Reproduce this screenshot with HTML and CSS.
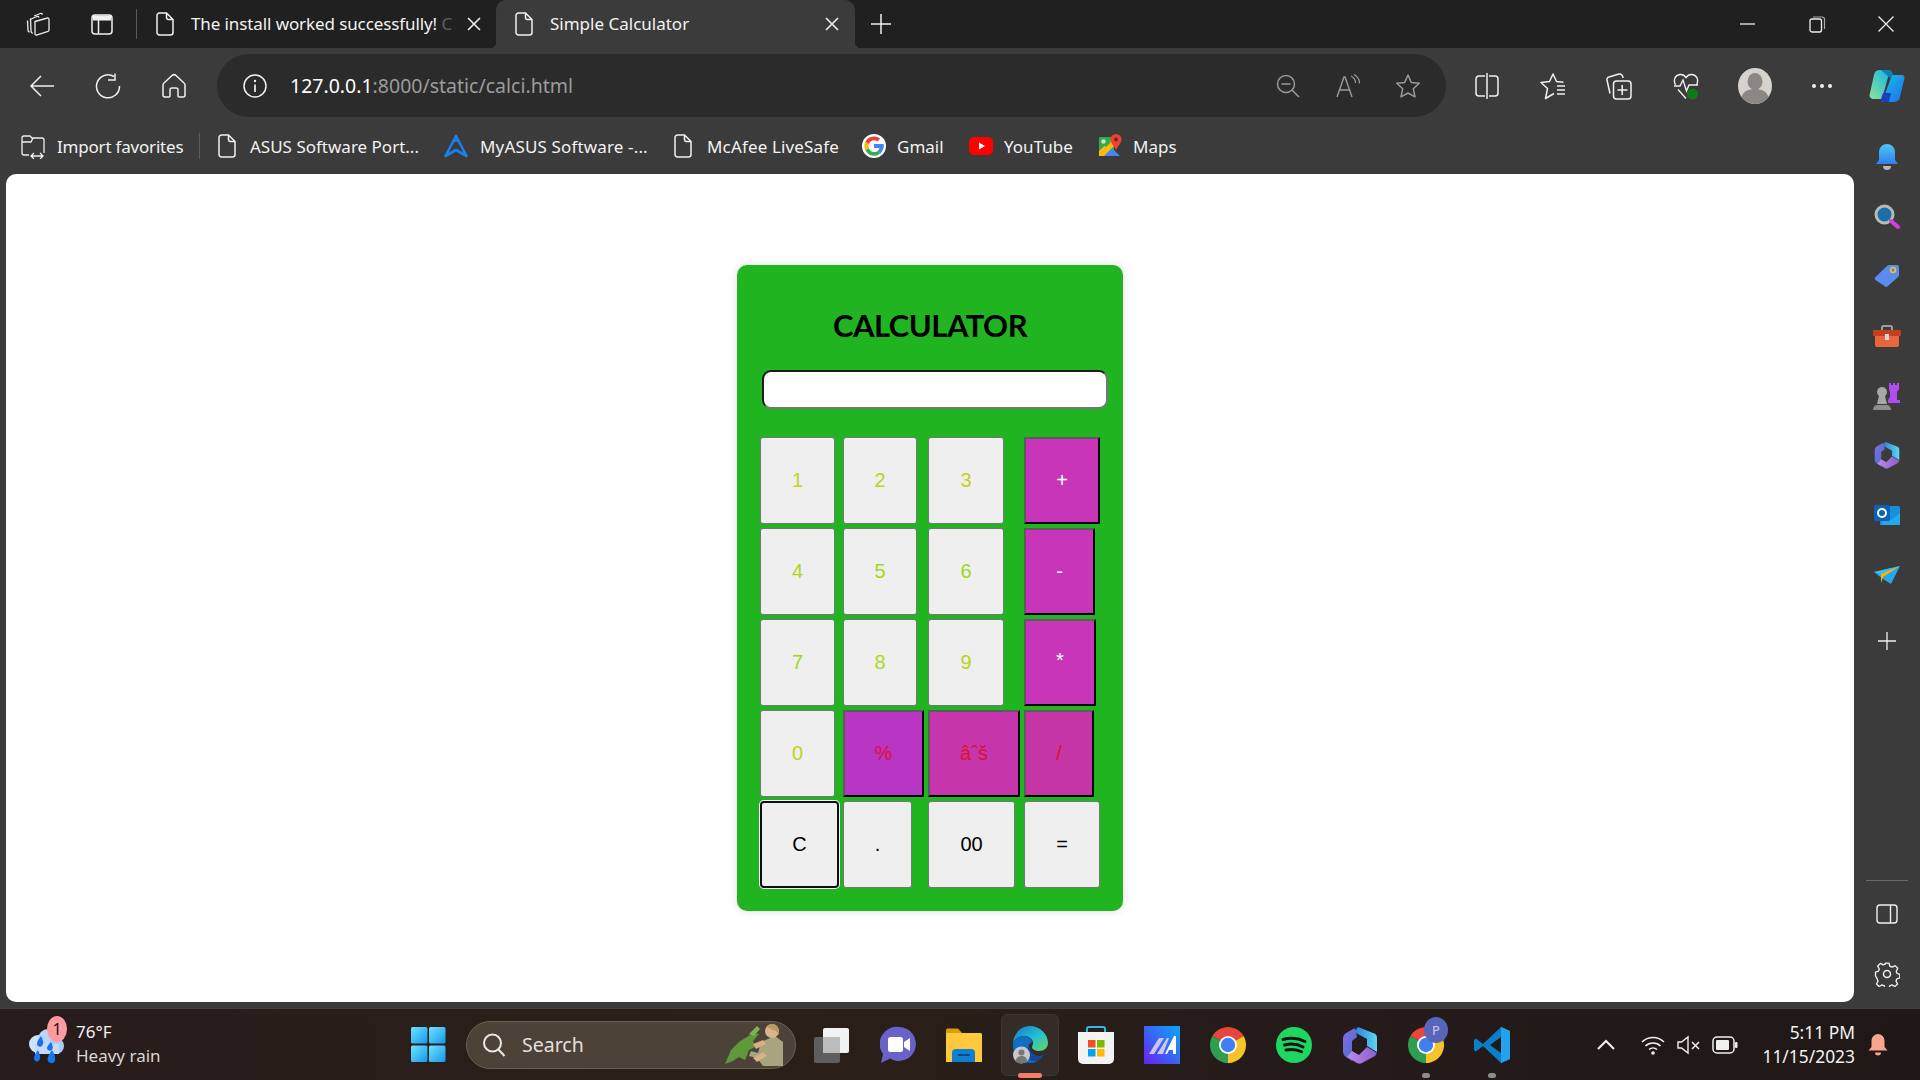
FILE: index.html
```html
<!DOCTYPE html>
<html lang="en">
<head>
<meta charset="utf-8">
<title>Simple Calculator</title>
<link rel="stylesheet" href="styles.css">
</head>
<body>
<svg class="defs" aria-hidden="true">
  <defs>
    <linearGradient id="gM1" x1="0" y1="0" x2="1" y2="1"><stop offset="0" stop-color="#8a6be0"/><stop offset="1" stop-color="#3f6fd0"/></linearGradient>
    <linearGradient id="gM2" x1="0" y1="0" x2="1" y2="0"><stop offset="0" stop-color="#2a7fd8"/><stop offset="1" stop-color="#5fd6f0"/></linearGradient>
    <linearGradient id="gM3" x1="0" y1="0" x2="1" y2="0"><stop offset="0" stop-color="#b98ae8"/><stop offset="1" stop-color="#8a5fd0"/></linearGradient>
    <linearGradient id="gEdge" x1="0" y1="0" x2="1" y2="1"><stop offset="0" stop-color="#1478c8"/><stop offset=".55" stop-color="#2ac0d0"/><stop offset="1" stop-color="#66d860"/></linearGradient>
    <linearGradient id="gBell" x1="0" y1="0" x2="0" y2="1"><stop offset="0" stop-color="#4fc6f5"/><stop offset="1" stop-color="#2f80ed"/></linearGradient>
    <linearGradient id="gWin" x1="0" y1="0" x2="1" y2="1"><stop offset="0" stop-color="#6fe3ff"/><stop offset="1" stop-color="#1497ea"/></linearGradient>
    <linearGradient id="gAsus" x1="1" y1="0" x2="0" y2="1"><stop offset="0" stop-color="#08a8f8"/><stop offset="1" stop-color="#6a22f0"/></linearGradient>
    <linearGradient id="gCop" x1="0" y1="0" x2="1" y2="1"><stop offset="0" stop-color="#16c0e8"/><stop offset="1" stop-color="#1f6fe8"/></linearGradient>
    <linearGradient id="gCop2" x1="0" y1="1" x2="1" y2="0"><stop offset="0" stop-color="#8fe39a"/><stop offset="1" stop-color="#10b4e8"/></linearGradient>
    <symbol id="doc" viewBox="0 0 18 24"><path d="M3.5 1h7l6.500 6.500V20.500a2.500 2.500 0 0 1-2.500 2.500h-11A2.500 2.500 0 0 1 1 20.500V3.500A2.500 2.500 0 0 1 3.500 1zM10.500 1v4.500a2 2 0 0 0 2 2H17" fill="none" stroke="#f0f0f0" stroke-width="1.500"/></symbol>
    <symbol id="m365" viewBox="0 0 36 38"><path d="M16 1 31 7a5 5 0 0 1 4 5v14L25 20V13L12 6z" fill="url(#gM2)"/><path d="M1 12a6 6 0 0 1 3-5l9-5 2 9-5 4v10l5 5-5 5-6-4a6 6 0 0 1-3-5z" fill="url(#gM1)"/><path d="M10 25l7 4 8-8 10 6-2 3-13 7a5 5 0 0 1-5 0L5 31z" fill="url(#gM3)"/></symbol>
    <symbol id="chromeLogo" viewBox="0 0 40 40"><path d="M20 20 37.300 10A20 20 0 0 0 2.700 10z" fill="#e8453c"/><path d="M20 20 2.700 10A20 20 0 0 0 20 40z" fill="#2f9e4f"/><path d="M20 20 20 40A20 20 0 0 0 37.300 10z" fill="#f8c22b"/><circle cx="20" cy="20" r="10" fill="#fff"/><circle cx="20" cy="20" r="8" fill="#3f7ff0"/></symbol>
  </defs>
</svg>

<header class="tabstrip">
  <div class="tab-slot"><svg class="ic" viewBox="0 0 26 24" width="26" height="24"><g fill="none" stroke="#eee" stroke-width="1.300"><path d="M9 4 15.500 1.500a1.500 1.500 0 0 1 2 1.200"/><path d="M5 7.500 12 4.500a1.500 1.500 0 0 1 2 1"/><path d="M2.500 8.500 3 18c0 1 .7 2 1.700 2.200"/><path d="M5.500 6.500 6 19c0 1 .7 2 1.700 2.300"/><path d="M10 9.500 22.500 6a1.200 1.200 0 0 1 1.500 1.200V18a1.500 1.500 0 0 1-1 1.400L11.500 23a1.200 1.200 0 0 1-1.500-1.200z"/></g></svg></div>
  <div class="tab-slot"><svg class="ic" viewBox="0 0 24 24" width="24" height="24"><rect x="2" y="3" width="20" height="19" rx="3" fill="none" stroke="#f0f0f0" stroke-width="1.500"/><path d="M3 3.500h18v5H3z" fill="#f0f0f0"/><path d="M8.500 8v13.500" stroke="#f0f0f0" stroke-width="1.500"/></svg></div>
  <div class="tab-sep"></div>
  <div class="tab tab-idle">
    <svg class="doc-ic" width="18" height="24"><use href="#doc"/></svg>
    <span class="tab-title">The install worked successfully!<span class="tab-dim"> C</span></span>
    <svg class="tab-x" viewBox="0 0 18 18" width="18" height="18"><path d="M3 3l12 12M15 3 3 15" stroke="#f0f0f0" stroke-width="1.600"/></svg>
  </div>
  <div class="tab tab-active">
    <svg class="doc-ic" width="18" height="24"><use href="#doc"/></svg>
    <span class="tab-title">Simple Calculator</span>
    <svg class="tab-x" viewBox="0 0 18 18" width="18" height="18"><path d="M3 3l12 12M15 3 3 15" stroke="#f0f0f0" stroke-width="1.600"/></svg>
  </div>
  <svg class="tab-new" viewBox="0 0 24 24" width="24" height="24"><path d="M12 2v20M2 12h20" stroke="#f0f0f0" stroke-width="1.500"/></svg>
  <div class="win-ctrls">
    <div class="win-slot"><svg viewBox="0 0 18 18" width="18" height="18"><path d="M1 9h15" stroke="#eee" stroke-width="1.300"/></svg></div>
    <div class="win-slot"><svg viewBox="0 0 18 18" width="18" height="18"><rect x="2" y="4" width="11.500" height="13" rx="2" fill="none" stroke="#eee" stroke-width="1.300"/><path d="M5 2h9a2.500 2.500 0 0 1 2.500 2.500V14" fill="none" stroke="#aaa" stroke-width="1.200"/></svg></div>
    <div class="win-slot"><svg viewBox="0 0 18 18" width="18" height="18"><path d="M1.500 1.500l15 15M16.500 1.500l-15 15" stroke="#eee" stroke-width="1.300"/></svg></div>
  </div>
</header>

<nav class="toolbar">
  <div class="tool-slot tool-first"><svg viewBox="0 0 26 24" width="26" height="24"><path d="M25 12H2M12 2 2 12l10 10" fill="none" stroke="#f0f0f0" stroke-width="1.500"/></svg></div>
  <div class="tool-slot"><svg viewBox="0 0 26 26" width="26" height="26"><path d="M19 3.500A11.500 11.500 0 1 0 24.500 13" fill="none" stroke="#f0f0f0" stroke-width="1.500"/><path d="M20 .5v6.500h-7" fill="none" stroke="#f0f0f0" stroke-width="1.500"/></svg></div>
  <div class="tool-slot"><svg viewBox="0 0 24 26" width="24" height="26"><path d="M10 2.500a3 3 0 0 1 4 0l8 7.500a2.500 2.500 0 0 1 1 2v10a2 2 0 0 1-2 2h-4a1 1 0 0 1-1-1v-6a2 2 0 0 0-2-2h-4a2 2 0 0 0-2 2v6a1 1 0 0 1-1 1H3a2 2 0 0 1-2-2V12a2.500 2.500 0 0 1 1-2z" fill="none" stroke="#f0f0f0" stroke-width="1.500"/></svg></div>
  <div class="omnibox">
    <svg class="omni-info" viewBox="0 0 24 24" width="24" height="24"><circle cx="12" cy="12" r="11" fill="none" stroke="#f0f0f0" stroke-width="1.500"/><path d="M12 10.500V18" stroke="#f0f0f0" stroke-width="1.700"/><circle cx="12" cy="7" r="1.200" fill="#f0f0f0"/></svg>
    <span class="url"><span class="url-host">127.0.0.1</span>:8000/static/calci.html</span>
    <svg class="omni-right omni-first" viewBox="0 0 24 24" width="24" height="24"><circle cx="10" cy="10" r="8.500" fill="none" stroke="#9a9a9a" stroke-width="1.500"/><path d="M5.500 10h9M16 16l7 7" stroke="#9a9a9a" stroke-width="1.500"/></svg>
    <svg class="omni-right" viewBox="0 0 24 24" width="24" height="24"><path d="M1 23 8 3h1l7 20M3.500 16h11" fill="none" stroke="#9a9a9a" stroke-width="1.400"/><path d="M15 2c3 1.500 4.500 4 4.500 7M18 .5c3.500 2 5.500 5.500 5.500 9" fill="none" stroke="#9a9a9a" stroke-width="1.200"/></svg>
    <svg class="omni-right omni-star" viewBox="0 0 26 26" width="26" height="26"><path d="M13 2l3.300 7.500 8 .8-6 5.500 1.700 8L13 20l-7 3.800 1.700-8-6-5.500 8-.8z" fill="none" stroke="#9a9a9a" stroke-width="1.500" stroke-linejoin="round"/></svg>
  </div>
  <div class="tool-slot tool-gap"><svg viewBox="0 0 24 26" width="24" height="26"><path d="M10 3H4a3 3 0 0 0-3 3v14a3 3 0 0 0 3 3h6M14 3h6a3 3 0 0 1 3 3v14a3 3 0 0 1-3 3h-6M12 0v26" fill="none" stroke="#f0f0f0" stroke-width="1.500"/></svg></div>
  <div class="tool-slot"><svg viewBox="0 0 26 28" width="26" height="28"><path d="M14 21.500 5.500 26.500 7.500 16.500 1 10.500l8.500-1L13 2l3.500 7.500 7 .8" fill="none" stroke="#f0f0f0" stroke-width="1.500" stroke-linejoin="round"/><path d="M17 14h8M17 18h8M17 22h8" stroke="#f0f0f0" stroke-width="1.400"/></svg></div>
  <div class="tool-slot"><svg viewBox="0 0 26 28" width="26" height="28"><path d="M4 21.500 1 8a2.500 2.500 0 0 1 2-3l10-3a3 3 0 0 1 3.500 2l.7 2" fill="none" stroke="#f0f0f0" stroke-width="1.500"/><rect x="7.500" y="9" width="17.500" height="18" rx="3" fill="#3b3b3b" stroke="#f0f0f0" stroke-width="1.500"/><path d="M16.200 13v10M11.500 18h10" stroke="#f0f0f0" stroke-width="1.500"/></svg></div>
  <div class="tool-slot tool-67"><svg viewBox="0 0 26 28" width="26" height="28"><path d="M2.500 13C0 8 2 3 7 2.500c3-.3 5 1.500 6 3 1-1.500 3-3.300 6-3 5 .5 7 5.500 4.500 10.500M5 17.500l8 9" fill="none" stroke="#f0f0f0" stroke-width="1.400"/><path d="M1 14h6l3-6 3.500 11 2.500-6h9" fill="none" stroke="#f0f0f0" stroke-width="1.400"/><circle cx="19.500" cy="22" r="5.500" fill="#107c10"/><path d="M17 22l2 2 3-4" fill="none" stroke="#073" stroke-width="1.200"/></svg></div>
  <div class="tool-slot tool-wide"><svg viewBox="0 0 34 36" width="34" height="36"><ellipse cx="17" cy="18" rx="17" ry="18" fill="#d6d3cf"/><ellipse cx="17" cy="13.500" rx="7.500" ry="8.500" fill="#8a8785"/><path d="M3.500 29c2-6 7-8 13.500-8s11.500 2 13.500 8c-3 4-8 7-13.500 7s-10.500-3-13.500-7z" fill="#8a8785"/></svg></div>
  <div class="tool-slot tool-64"><svg viewBox="0 0 22 6" width="22" height="6"><circle cx="3" cy="3" r="2" fill="#f0f0f0"/><circle cx="11" cy="3" r="2" fill="#f0f0f0"/><circle cx="19" cy="3" r="2" fill="#f0f0f0"/></svg></div>
  <div class="tool-slot"><svg viewBox="0 0 36 34" width="36" height="34"><path d="M10 1h11L13 30H4a3.500 3.500 0 0 1-3.300-4.500L5 6a6 6 0 0 1 5-5z" fill="url(#gCop2)"/><path d="M23 6h10a2.500 2.500 0 0 1 2.500 3L31 28a6 6 0 0 1-5.500 5H13z" fill="url(#gCop)"/><path d="M14 24h8l-2 9h-5a3 3 0 0 1-3-3z" fill="#1b3fc4"/><path d="M12 1h8a3 3 0 0 1 3 2l1 3-3 3z" fill="#0f7fb5"/></svg></div>
</nav>

<div class="workspace">
  <div class="page-col">
    <div class="bookmarks">
      <div class="bm"><svg viewBox="0 0 24 26" width="24" height="26"><path d="M1 20V5a2 2 0 0 1 2-2h6l2 2h10a2 2 0 0 1 2 2v13M1 9h9l2-4M1 20a2 2 0 0 0 2 2h5M10 23h12M13 20l-3 3 3 3M19 20l3 3-3 3" fill="none" stroke="#f0f0f0" stroke-width="1.300"/></svg><span class="bm-tight">Import favorites</span></div>
      <div class="bm-sep"></div>
      <div class="bm"><svg class="doc-ic" width="18" height="24"><use href="#doc"/></svg><span>ASUS Software Port...</span></div>
      <div class="bm"><svg viewBox="0 0 24 24" width="24" height="24"><path d="M12 2 22.500 22 12 16 1.500 22zM12 2v6" fill="none" stroke="#1a80f0" stroke-width="2.600" stroke-linejoin="round"/></svg><span class="bm-wide">MyASUS Software -...</span></div>
      <div class="bm"><svg class="doc-ic" width="18" height="24"><use href="#doc"/></svg><span class="bm-wide">McAfee LiveSafe</span></div>
      <div class="bm"><svg viewBox="0 0 24 24" width="24" height="24"><circle cx="12" cy="12" r="12" fill="#fff"/><path d="M12 10v4h5.500a5.500 5.500 0 0 1-2 3l3 2.300c2-1.800 3-4.300 3-7.300 0-.7 0-1.300-.2-2z" fill="#4285f4"/><path d="M6.800 14a5.500 5.500 0 0 0 8.700 3l3 2.300A9.500 9.500 0 0 1 3.500 16.300z" fill="#34a853"/><path d="M6.800 14a5.500 5.500 0 0 1 0-4L3.500 7.500a9.500 9.500 0 0 0 0 9z" fill="#fbbc05"/><path d="M6.800 10a5.500 5.500 0 0 1 8.500-2.500l2.800-2.700A9.500 9.500 0 0 0 3.500 7.500z" fill="#ea4335"/><circle cx="12" cy="12" r="4.500" fill="#fff"/><path d="M12 10h9.500v4H12z" fill="#4285f4"/></svg><span>Gmail</span></div>
      <div class="bm"><svg viewBox="0 0 24 20" width="24" height="20"><rect y="1" width="24" height="18" rx="5" fill="#f00"/><path d="M10 6.500v7l6-3.500z" fill="#fff"/></svg><span>YouTube</span></div>
      <div class="bm"><svg viewBox="0 0 24 24" width="24" height="24"><path d="M1 3h15v19H1z" fill="#34a853"/><path d="M1 22 11 11l11 11z" fill="#4285f4"/><path d="M1 22V17L16 3h2l2 5L6 22z" fill="#fbbc05"/><path d="M1 3h7l5 5-5 5-7-7z" fill="#34a853"/><circle cx="5.500" cy="7.500" r="2.200" fill="#c6e8d0"/><path d="M18 0a5.500 5.500 0 0 1 5.500 5.500c0 4-4 6-5.500 11-1.500-5-5.500-7-5.500-11A5.500 5.500 0 0 1 18 0z" fill="#ea4335"/><circle cx="18" cy="5.500" r="2" fill="#8f1c14"/></svg><span>Maps</span></div>
    </div>
    <main class="page">
      <section class="calc">
        <h1 class="calc-title">CALCULATOR</h1>
        <input class="calc-display" type="text">
        <div class="keys">
          <button class="key num w75 c-a">1</button><button class="key num w74 c-b">2</button><button class="key num w76 c-a">3</button><button class="key op w76 bg-a t-w">+</button>
          <button class="key num w75 c-c">4</button><button class="key num w74 c-d">5</button><button class="key num w76 c-e">6</button><button class="key op w71 bg-a t-w">-</button>
          <button class="key num w75 c-e">7</button><button class="key num w74 c-c">8</button><button class="key num w76 c-b">9</button><button class="key op w72 bg-a t-w t-up">*</button>
          <button class="key num w75 c-a">0</button><button class="key op w81 bg-b t-r">%</button><button class="key op w92 bg-c t-r">âˆš</button><button class="key op w70 bg-d t-r">/</button>
          <button class="key num w79 focus">C</button><button class="key num w69">.</button><button class="key num w87">00</button><button class="key num w76">=</button>
        </div>
      </section>
    </main>
  </div>
  <aside class="sidebar">
    <div class="side-slot"><svg viewBox="0 0 24 28" width="24" height="28"><path d="M12 1a8 8 0 0 1 8 8v8l3 4H1l3-4V9a8 8 0 0 1 8-8z" fill="url(#gBell)"/><path d="M8 23h8a4 4 0 0 1-8 0z" fill="#b8b8b8"/></svg></div>
    <div class="side-slot"><svg viewBox="0 0 26 26" width="26" height="26"><circle cx="10.500" cy="10.500" r="8.500" fill="#1a6fa8" stroke="#b8b8b8" stroke-width="3"/><path d="M17 17l7 6" stroke="#d040e0" stroke-width="4" stroke-linecap="round"/></svg></div>
    <div class="side-slot"><svg viewBox="0 0 26 24" width="26" height="24"><path d="M1.500 13 13 2a3 3 0 0 1 2-1h8a2 2 0 0 1 2 2v8a3 3 0 0 1-1 2L14 22a2.500 2.500 0 0 1-3.500 0L1.500 16a2 2 0 0 1 0-3z" fill="#5a8cf0"/><circle cx="19" cy="6" r="2.500" fill="none" stroke="#f5c518" stroke-width="1.600"/></svg></div>
    <div class="side-slot"><svg viewBox="0 0 28 22" width="28" height="22"><path d="M9 5V2.500A1.500 1.500 0 0 1 10.500 1h7A1.500 1.500 0 0 1 19 2.500V5" fill="none" stroke="#bdbdbd" stroke-width="1.500"/><rect y="5" width="28" height="6" rx="1" fill="#c43f1b"/><path d="M2 11h24v9a2 2 0 0 1-2 2H4a2 2 0 0 1-2-2z" fill="#e8673a"/><rect x="12" y="9" width="4" height="6" fill="#d8d8d8"/></svg></div>
    <div class="side-slot"><svg viewBox="0 0 28 28" width="28" height="28"><circle cx="9" cy="10" r="5" fill="#a8a8a8"/><path d="M6 14h6l2 8H4z" fill="#a8a8a8"/><path d="M0 28c0-3 2-5 4-5h10c2 0 4 2 4 5z" fill="#8e8e8e"/><path d="M16 1h2v2h2V1h2v2h2V1h2v6l-2 3v8h3v3H15v-3l2-3v-5l-1-3z" fill="#b14cf0"/></svg></div>
    <div class="side-slot"><svg width="26" height="28"><use href="#m365"/></svg></div>
    <div class="side-slot"><svg viewBox="0 0 26 24" width="26" height="24"><path d="M9 3h15a2 2 0 0 1 2 1v15a3 3 0 0 1-3 3H6V6z" fill="#1490df"/><path d="M8 12l9 5 9-7v12H8z" fill="#28a8ea"/><rect x="0" y="2" width="16" height="16" rx="2" fill="#0a62b5"/><circle cx="8" cy="10" r="4" fill="none" stroke="#fff" stroke-width="2"/></svg></div>
    <div class="side-slot"><svg viewBox="0 0 26 18" width="26" height="18"><path d="M0 6 26 0 17 18 9 13z" fill="#2aa6e8"/><path d="M0 6 26 0 7 8z" fill="#39c0f0"/><path d="M7 8 26 0 9 11l-2 6z" fill="#f5b40f"/></svg></div>
    <div class="side-slot side-plus"><svg viewBox="0 0 20 20" width="20" height="20"><path d="M10 1v18M1 10h18" stroke="#f0f0f0" stroke-width="1.300"/></svg></div>
    <div class="side-line"></div>
    <div class="side-slot side-tall"><svg viewBox="0 0 22 20" width="22" height="20"><rect x="1" y="1" width="20" height="18" rx="3" fill="none" stroke="#f0f0f0" stroke-width="1.400"/><path d="M14.500 1v18" stroke="#f0f0f0" stroke-width="1.400"/></svg></div>
    <div class="side-slot side-tall"><svg viewBox="0 0 26 26" width="26" height="26"><path d="M11 1h4l1 3.500 2.500 1 3.300-1.700 2.900 3-1.700 3.200 1 2.500 3 1v4l-3.200 1-1 2.500 1.700 3.200-2.900 2.800-3.300-1.700-2.500 1-1 3.200h-4l-1-3.200-2.500-1-3.300 1.700-2.900-2.800 1.700-3.200-1-2.500L0 15v-4l3.200-1 1-2.500L2.500 4.300l2.900-3L8.500 3l2.500-1z" transform="translate(1.500 1.200) scale(.9)" fill="none" stroke="#f0f0f0" stroke-width="1.500" stroke-linejoin="round"/><circle cx="13" cy="13" r="3.500" fill="none" stroke="#f0f0f0" stroke-width="1.500"/></svg></div>
  </aside>
</div>

<footer class="taskbar">
  <div class="weather">
    <svg class="weather-ic" viewBox="0 0 38 42" width="38" height="42"><circle cx="11" cy="20" r="9" fill="#cfe4fb"/><circle cx="21" cy="15" r="10" fill="#b9d7f8"/><circle cx="29" cy="22" r="8" fill="#a9cdf6"/><rect x="8" y="20" width="24" height="10" fill="#c4dcf9"/><path d="M14 12q4 7 1 10a3 3 0 0 1-5-2q0-3 4-8zM24 18q3 5 1 8a3 3 0 0 1-5-2q0-2 4-6z" fill="#1b72e8"/><path d="M11 26q3 6 1.500 10a3 3 0 0 1-5.500-1q0-4 4-9zM25 26q4 6 3 11a4 4 0 0 1-7.500-1q0-4 4.500-10z" fill="#1678f0"/></svg>
    <span class="weather-badge">1</span>
    <div class="weather-text"><span>76°F</span><span class="weather-sub">Heavy rain</span></div>
  </div>
  <div class="task-slot"><svg viewBox="0 0 36 36" width="36" height="36"><rect x="1" y="0" width="16.500" height="16.500" rx="1.500" fill="url(#gWin)"/><rect x="19" y="0" width="16.500" height="16.500" rx="1.500" fill="url(#gWin)"/><rect x="1" y="18.500" width="16.500" height="16.500" rx="1.500" fill="url(#gWin)"/><rect x="19" y="18.500" width="16.500" height="16.500" rx="1.500" fill="url(#gWin)"/></svg></div>
  <div class="search">
    <svg viewBox="0 0 24 24" width="24" height="24"><circle cx="10.500" cy="10" r="8.500" fill="none" stroke="#e8e8e8" stroke-width="2"/><path d="M16.500 16.500l6 6.500" stroke="#e8e8e8" stroke-width="2"/></svg>
    <span class="search-text">Search</span>
    <svg class="search-art" viewBox="0 0 64 46" width="64" height="46"><path d="M2 42 8 28l8-8 14-9 6 1-6 7 2 6-6 3-4 10-6-3-6 4z" fill="#5f9a3a"/><path d="M26 12l8-8 3 3-6 7z" fill="#7fb054"/><path d="M38 20l14-6 8 6v24H40l-6-8-8-2 2-5 7 2z" fill="#a8a57e"/><circle cx="49" cy="9" r="7" fill="#d9b48a"/><path d="M44 5q5-6 11 0l1 8-3-4z" fill="#b89a5c"/><path d="M30 22l10-4 3 4-10 5zM30 36l10-6 4 4-10 6z" fill="#dcae85"/></svg>
  </div>
  <div class="task-slot task-first"><svg viewBox="0 0 36 36" width="36" height="36"><rect x="0" y="10" width="26" height="26" rx="2" fill="#5e5e5e"/><rect x="9" y="1" width="26" height="25" rx="2" fill="#f2f2f2"/><path d="M9 10h17v16H9z" fill="#bcbcbc"/></svg></div>
  <div class="task-slot"><svg viewBox="0 0 36 38" width="36" height="38"><path d="M19 1a17 17 0 1 1-9 31.500L1 37l2-9A17 17 0 0 1 19 1z" fill="#6a62c8"/><rect x="8" y="11" width="15" height="15" rx="2.500" fill="#fff"/><path d="M24 16l6-4v13l-6-4z" fill="#fff"/></svg></div>
  <div class="task-slot"><svg viewBox="0 0 36 36" width="36" height="36"><path d="M0 3a1.500 1.500 0 0 1 1.500-1.500H12L16 6h18v5H0z" fill="#d8a000"/><path d="M0 6h34.500a1.500 1.500 0 0 1 1.500 1.500V35H0z" fill="#ffc83d"/><path d="M6 35V26a4 4 0 0 1 4-4h15a4 4 0 0 1 4 4v9z" fill="#0f7fd0"/><rect x="12" y="27" width="12" height="2" fill="#054a8a"/></svg></div>
  <div class="task-slot task-on">
    <svg viewBox="0 0 36 38" width="36" height="38"><path d="M1 17C2 7 9 0 18 0c10 0 18 8 18 17 0 5-4 8-9 8-4 0-7-2-7-4 0-1 1-2 1-4 0-4-4-7-9-7-5 0-9 3-11 7z" fill="url(#gEdge)"/><path d="M1 17c3-5 7-7 11-7 5 0 8 3 8 6-4 2-5 7-2 12 2 3 6 5 11 4-3 3-7 5-11 5C8 37 0 28 1 17z" fill="#0f6fc4"/><path d="M18 21c0 6 5 9 9 9 2 0 4-1 5-2-2 5-7 8-12 7-6-2-7-10-2-14z" fill="#14469a"/><circle cx="9.500" cy="29" r="8.500" fill="#c8c8c8"/><circle cx="9.500" cy="26.500" r="3" fill="#777"/><path d="M3.500 35c1-4 3.500-5 6-5s5 1 6 5a8.500 8.500 0 0 1-12 0z" fill="#777"/></svg>
    <span class="pill pill-on"></span>
  </div>
  <div class="task-slot"><svg viewBox="0 0 36 38" width="36" height="38"><path d="M9 6V3a2 2 0 0 1 2-2h14a2 2 0 0 1 2 2v3" fill="none" stroke="#33b5e8" stroke-width="2"/><path d="M0 6h36v27a5 5 0 0 1-5 5H5a5 5 0 0 1-5-5z" fill="#f3f3f3"/><rect x="10" y="14" width="7.500" height="7.500" fill="#f25022"/><rect x="19" y="14" width="7.500" height="7.500" fill="#7fba00"/><rect x="10" y="23" width="7.500" height="7.500" fill="#00a4ef"/><rect x="19" y="23" width="7.500" height="7.500" fill="#ffb900"/></svg></div>
  <div class="task-slot"><svg viewBox="0 0 36 38" width="36" height="38"><rect width="36" height="38" fill="url(#gAsus)"/><path d="M5 28 15 12h5L10 28zM13 28 23 12h2L19 28z" fill="#c9c7f8"/><path d="M21 28 30 10h2v18h-3v-4h-4l-2 4z" fill="#fff"/></svg></div>
  <div class="task-slot"><svg width="36" height="36"><use href="#chromeLogo"/></svg></div>
  <div class="task-slot"><svg viewBox="0 0 36 36" width="36" height="36"><circle cx="18" cy="18" r="18" fill="#1ed760"/><path d="M7 12.500c7-2 15-1.500 22 2M8.500 18c6-1.500 13-1 18.500 2M10 23c5-1 11-.8 15.500 1.800" fill="none" stroke="#111" stroke-width="3" stroke-linecap="round"/></svg></div>
  <div class="task-slot"><svg width="36" height="38"><use href="#m365"/></svg></div>
  <div class="task-slot">
    <svg width="36" height="36"><use href="#chromeLogo"/></svg>
    <span class="profile-dot">P</span>
    <span class="pill"></span>
  </div>
  <div class="task-slot">
    <svg viewBox="0 0 36 38" width="36" height="38"><path d="M27 1 9 18 2 12.500 0 14v10l2 1.500L9 20l18 17 9-4V5z" fill="#0a7fc8"/><path d="M27 11v16l-11-8z" fill="#1f1a18"/><path d="M27 1l9 4v28l-9 4z" fill="#23a3ee"/></svg>
    <span class="pill"></span>
  </div>
  <div class="tray">
    <div class="tray-slot"><svg viewBox="0 0 18 12" width="18" height="12"><path d="M1 10 9 2l8 8" fill="none" stroke="#f0f0f0" stroke-width="2"/></svg></div>
    <div class="tray-slot tray-wifi"><svg viewBox="0 0 24 20" width="24" height="20"><path d="M1 7c6-6 16-6 22 0M4.500 11c4-4 11-4 15 0M8 14.500c2.300-2 5.700-2 8 0" fill="none" stroke="#f0f0f0" stroke-width="1.600"/><circle cx="12" cy="18" r="1.800" fill="#f0f0f0"/></svg></div>
    <div class="tray-slot"><svg viewBox="0 0 24 20" width="24" height="20"><path d="M1 7h3.500L11 2v16l-6.500-5H1z" fill="none" stroke="#f0f0f0" stroke-width="1.400"/><path d="M15 7l7 7M22 7l-7 7" stroke="#f0f0f0" stroke-width="1.500"/></svg></div>
    <div class="tray-slot"><svg viewBox="0 0 26 18" width="26" height="18"><rect x="1" y="1" width="21" height="16" rx="4" fill="none" stroke="#f0f0f0" stroke-width="1.500"/><rect x="4" y="4" width="13" height="10" rx="1" fill="#f0f0f0"/><rect x="23" y="6" width="2.500" height="6" rx="1" fill="#f0f0f0"/></svg></div>
    <div class="clock"><span>5:11 PM</span><span>11/15/2023</span></div>
    <div class="tray-bell"><svg viewBox="0 0 20 24" width="20" height="24"><path d="M10 1a6.500 6.500 0 0 1 6.500 6.500V14l3 3.500H.5l3-3.500V7.500A6.500 6.500 0 0 1 10 1z" fill="#f9a58c"/><path d="M7 19.500h6a3 3 0 0 1-6 0z" fill="#f9a58c"/></svg></div>
  </div>
</footer>
</body>
</html>
```

FILE: styles.css
```css
* { box-sizing: border-box; }
html, body { margin: 0; height: 100%; }
body {
  width: 1920px;
  height: 1080px;
  overflow: hidden;
  display: flex;
  flex-direction: column;
  background: #3b3b3b;
  color: #f2f2f2;
  font-family: "Noto Sans", "Open Sans", sans-serif;
  font-size: 17px;
}
svg { display: block; flex: none; }
.defs { position: absolute; width: 0; height: 0; }

/* tab strip */
.tabstrip { height: 48px; flex: none; display: flex; align-items: center; background: #202020; }
.tab-slot { width: 64px; display: flex; justify-content: center; }
.tab-slot:first-child { margin-left: 6px; }
.tab-sep { width: 1px; height: 30px; margin: 0 1px 0 2px; background: #5c5c5c; }
.tab { height: 48px; display: flex; align-items: center; width: 358px; flex: none; }
.tab-idle { padding-left: 18px; }
.tab-active {
  width: 359px;
  padding: 0 14px 0 19px;
  background: #3b3b3b;
  border-radius: 10px 10px 0 0;
  position: relative;
}
.tab-active::before, .tab-active::after {
  content: "";
  position: absolute;
  bottom: 0;
  width: 6px;
  height: 6px;
}
.tab-active::before { left: -6px; background: radial-gradient(circle at 0 0, #202020 6px, #3b3b3b 6.5px); }
.tab-active::after { right: -6px; background: radial-gradient(circle at 100% 0, #202020 6px, #3b3b3b 6.5px); }
.tab-title { margin: 0 0 2px 17px; white-space: nowrap; overflow: hidden; flex: 1; }
.tab-idle .tab-title { flex: none; width: 262px; letter-spacing: -.1px; }
.tab-idle .tab-x { margin-left: 12px; }
.tab-dim { color: #5f5f5f; }
.tab-new { margin-left: 14px; }
.win-ctrls { margin-left: auto; display: flex; }
.win-slot { width: 69px; display: flex; justify-content: center; }

/* toolbar */
.toolbar { height: 69px; flex: none; display: flex; align-items: flex-start; padding-top: 6px; }
.tool-slot { width: 66px; height: 63px; display: flex; align-items: center; justify-content: center; }
.tool-first { margin-left: 9px; }
.tool-gap { margin-left: 8px; }
.tool-wide { width: 70px; }
.tool-67 { width: 68px; }
.tool-64 { width: 64px; }
.omnibox {
  width: 1229px;
  height: 63px;
  margin-left: 10px;
  padding: 0 25px 0 26px;
  display: flex;
  align-items: center;
  background: #2b2b2b;
  border-radius: 32px;
}
.url { margin-left: 23px; font-size: 19.5px; color: #9c9c9c; }
.url-host { color: #fff; }
.omni-right { margin-left: 36px; }
.omni-star { margin-left: 35px; }
.omni-first { margin-left: auto; }

/* workspace */
.workspace { flex: 1; display: flex; min-height: 0; }
.page-col { width: 1854px; display: flex; flex-direction: column; }
.bookmarks {
  height: 57px;
  flex: none;
  padding: 1px 0 0 21px;
  display: grid;
  grid-template-columns: 178px 16px 229px 227px 191px 107px 129px auto;
  align-items: center;
  font-size: 17px;
}
.bm { display: flex; align-items: center; gap: 11px; white-space: nowrap; }
.bm .doc-ic { margin: 0 3px; }
.bm-tight { letter-spacing: -.2px; margin-left: 1px; }
.bm-wide { letter-spacing: .15px; margin-left: 1px; }
.bm-sep { width: 1px; height: 26px; background: #5c5c5c; }
.page {
  height: 828px;
  margin-left: 6px;
  display: flex;
  align-items: center;
  justify-content: center;
  background: #fff;
  border-radius: 10px;
}

/* calculator */
.calc {
  width: 386px;
  height: 646px;
  padding: 38px 23px 0;
  background: #20b520;
  border-radius: 10px;
  box-shadow: 0 0 10px rgba(0, 0, 0, .12);
}
.calc-title {
  margin: 0;
  height: 44px;
  line-height: 44px;
  text-align: center;
  color: #000;
  font-family: "Lato", sans-serif;
  font-size: 31px;
  font-weight: 700;
  letter-spacing: -.5px;
}
.calc-display {
  display: block;
  width: 346px;
  height: 39px;
  margin: 23px 0 28px 2px;
  padding: 0;
  background: #fff;
  border: 2px solid;
  border-color: #1c1c1c #767676 #767676 #1c1c1c;
  border-radius: 9px;
}
.keys {
  display: grid;
  grid-template-columns: 83px 85px 96px 76px;
  grid-auto-rows: 87px;
  row-gap: 4px;
  justify-items: start;
}
.key {
  height: 87px;
  padding: 0;
  font-family: "Liberation Sans", Arial, sans-serif;
  font-size: 20px;
  color: #000;
}
.num { background: #efefef; border: 1px solid #767676; border-radius: 3px; }
.op { border: 2px solid; border-color: #5c5c5c #000 #000 #5c5c5c; }
.w69 { width: 69px; } .w70 { width: 70px; } .w71 { width: 71px; } .w72 { width: 72px; }
.w74 { width: 74px; } .w75 { width: 75px; } .w76 { width: 76px; } .w79 { width: 79px; }
.w81 { width: 81px; } .w87 { width: 87px; } .w92 { width: 92px; }
.bg-a { background: #c835b8; }
.bg-b { background: #b935c4; }
.bg-c { background: #c635ac; }
.bg-d { background: #c535a6; }
.t-w { color: #fff; }
.t-r { color: #d8142e; }
.t-up { padding-bottom: 4px; }
.c-a { color: #c4d21c; }
.c-b { color: #b8d41c; }
.c-c { color: #aed61c; }
.c-d { color: #a4d61c; }
.c-e { color: #9cd81c; }
.focus {
  border: 2px solid #101010;
  border-radius: 4px;
  box-shadow: 0 0 0 1px #fff;
}

/* sidebar */
.sidebar { width: 66px; padding-top: 10px; display: flex; flex-direction: column; align-items: center; }
.side-slot { height: 59.700px; width: 66px; flex: none; display: flex; align-items: center; justify-content: center; }
.side-plus { margin-top: 7px; }
.side-line { width: 42px; height: 1px; margin-top: auto; margin-bottom: 3px; background: #6a6a6a; }
.side-tall { height: 60px; }
.side-tall:last-child { margin-bottom: 4px; }

/* taskbar */
.taskbar {
  height: 72px;
  flex: none;
  display: flex;
  align-items: center;
  position: relative;
  background: linear-gradient(90deg, #271c1b 0%, #2b2018 40%, #241b1a 70%, #1f1817 100%);
  border-top: 1px solid #463f3a;
}
.weather { width: 395px; padding-left: 27px; display: flex; align-items: center; position: relative; }
.weather-badge {
  position: absolute;
  left: 47px;
  top: -4px;
  width: 20px;
  height: 26px;
  border-radius: 50%;
  background: #ff9a9f;
  color: #1a1a1a;
  font-size: 16px;
  line-height: 26px;
  text-align: center;
}
.weather-text { margin: 0 0 2px 11px; display: flex; flex-direction: column; line-height: 24px; font-size: 17px; }
.weather-sub { color: #d9d6d3; }
.task-slot { width: 66px; height: 72px; flex: none; display: flex; align-items: center; justify-content: center; position: relative; }
.task-first { margin-left: 3px; }
.search {
  width: 330px;
  height: 48px;
  margin-left: 5px;
  padding: 0 8px 0 15px;
  display: flex;
  align-items: center;
  background: #4c4238;
  border: 1px solid #6a5f54;
  border-radius: 24px;
}
.search-text { margin-left: 16px; font-size: 19.500px; color: #e4e0dc; }
.search-art { margin-left: auto; }
.task-on::before {
  content: "";
  position: absolute;
  inset: 5px 4px 5px 4px;
  border-radius: 6px;
  background: #352b29;
  border: 1px solid #3f3533;
}
.task-on > svg { position: relative; }
.pill {
  position: absolute;
  bottom: 3px;
  left: 29px;
  width: 8px;
  height: 5px;
  border-radius: 3px;
  background: #8e8e8e;
}
.pill-on { left: 21px; width: 24px; background: #f47e68; }
.profile-dot {
  position: absolute;
  left: 31px;
  top: 8px;
  width: 24px;
  height: 26px;
  border-radius: 50%;
  background: #5865b8;
  color: #c8ccf0;
  font-size: 13px;
  line-height: 26px;
  text-align: center;
}
.tray { margin-left: auto; padding-right: 19px; display: flex; align-items: center; }
.tray-slot { width: 36px; display: flex; justify-content: center; }
.tray-wifi { margin-left: 11px; }
.clock { width: 112px; margin-bottom: 2px; display: flex; flex-direction: column; align-items: flex-end; line-height: 24px; font-size: 17.400px; }
.tray-bell { width: 46px; display: flex; justify-content: center; }
```
